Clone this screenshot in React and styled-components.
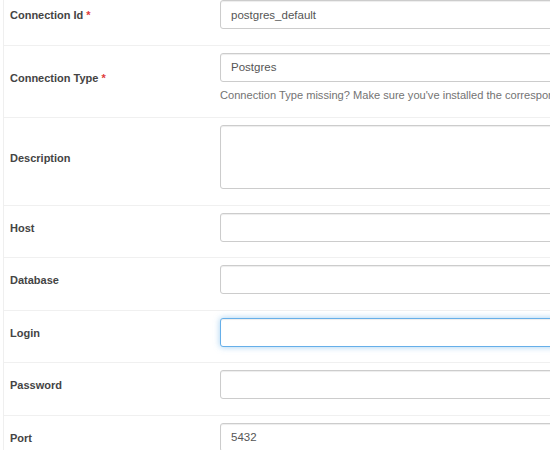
import React from "react";
import styled, { createGlobalStyle } from "styled-components";

const GlobalStyle = createGlobalStyle`
    html, body {
        margin: 0;
        padding: 0;
        background: #ffffff;
        overflow: hidden;
    }
    body {
        font-family: "Liberation Sans", Arial, sans-serif;
        color: #333333;
    }
`;

const Table = styled.div`
    width: 900px;
    margin-left: 3px;
    margin-top: -7px;
    border-left: 1px solid #efefef;
`;

const Row = styled.div`
    display: grid;
    grid-template-columns: 216px 1fr;
    border-top: ${(p) => (p.first ? "none" : "1px solid #f0f0f0")};
    padding: 7px 0 15.5px;
    box-sizing: border-box;
`;

const Label = styled.label`
    display: flex;
    align-items: center;
    padding-left: 6px;
    padding-top: 1px;
    font-size: 11px;
    font-weight: bold;
    color: #444444;
`;

const Required = styled.span`
    color: #e03b3b;
    margin-left: 3px;
`;

const Field = styled.div`
    display: flex;
    flex-direction: column;
`;

const Input = styled.input`
    box-sizing: border-box;
    width: 640px;
    height: 29px;
    padding: 0 10px;
    font-family: "Liberation Sans", Arial, sans-serif;
    font-size: 11.5px;
    color: #555555;
    background: #ffffff;
    border: 1px solid ${(p) => (p.focused ? "#66afe9" : "#cccccc")};
    border-radius: 3px;
    outline: none;
    box-shadow: ${(p) =>
        p.focused
            ? "inset 0 1px 1px rgba(0,0,0,.075), 0 0 6px rgba(102,175,233,.6)"
            : "inset 0 1px 1px rgba(0,0,0,.075)"};
`;

const TextArea = styled.textarea`
    box-sizing: border-box;
    width: 640px;
    height: 64px;
    resize: none;
    border: 1px solid #cccccc;
    border-radius: 3px;
    outline: none;
    box-shadow: inset 0 1px 1px rgba(0, 0, 0, 0.075);
`;

const Help = styled.span`
    margin-top: 7px;
    font-size: 11.1px;
    line-height: 13px;
    color: #737373;
    white-space: nowrap;
`;

const fields = [
    { label: "Host" },
    { label: "Database" },
    { label: "Login", focused: true },
    { label: "Password" },
    { label: "Port", value: "5432" },
];

export default function App() {
    return (
        <>
            <GlobalStyle />
            <Table>
                <Row first>
                    <Label>
                        Connection Id<Required>*</Required>
                    </Label>
                    <Field>
                        <Input defaultValue="postgres_default" />
                    </Field>
                </Row>
                <Row>
                    <Label>
                        Connection Type<Required>*</Required>
                    </Label>
                    <Field>
                        <Input defaultValue="Postgres" />
                        <Help>
                            Connection Type missing? Make sure you've installed
                            the corresponding Airflow Provider Package.
                        </Help>
                    </Field>
                </Row>
                <Row>
                    <Label>Description</Label>
                    <Field>
                        <TextArea />
                    </Field>
                </Row>
                {fields.map((f) => (
                    <Row key={f.label}>
                        <Label>{f.label}</Label>
                        <Field>
                            <Input
                                focused={f.focused}
                                defaultValue={f.value || ""}
                            />
                        </Field>
                    </Row>
                ))}
            </Table>
        </>
    );
}
